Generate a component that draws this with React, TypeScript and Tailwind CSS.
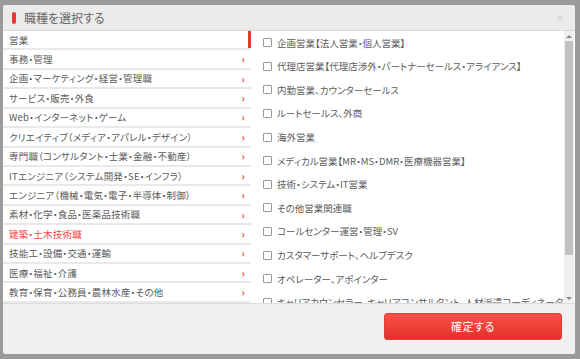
import { X } from 'lucide-react';

const categories = [
  '営業',
  '事務・管理',
  '企画・マーケティング・経営・管理職',
  'サービス・販売・外食',
  'Web・インターネット・ゲーム',
  'クリエイティブ（メディア・アパレル・デザイン）',
  '専門職（コンサルタント・士業・金融・不動産）',
  'ITエンジニア（システム開発・SE・インフラ）',
  'エンジニア（機械・電気・電子・半導体・制御）',
  '素材・化学・食品・医薬品技術職',
  '建築・土木技術職',
  '技能工・設備・交通・運輸',
  '医療・福祉・介護',
  '教育・保育・公務員・農林水産・その他',
];

const jobs = [
  '企画営業【法人営業・個人営業】',
  '代理店営業【代理店渉外・パートナーセールス・アライアンス】',
  '内勤営業、カウンターセールス',
  'ルートセールス、外商',
  '海外営業',
  'メディカル営業【MR・MS・DMR・医療機器営業】',
  '技術・システム・IT営業',
  'その他営業関連職',
  'コールセンター運営・管理・SV',
  'カスタマーサポート、ヘルプデスク',
  'オペレーター、アポインター',
  'キャリアカウンセラー、キャリアコンサルタント、人材派遣コーディネーター',
];

const font = {
  fontFamily: '"Noto Sans CJK JP", "Liberation Sans", sans-serif',
  fontFeatureSettings: '"palt"',
};

export default function App() {
  return (
    <div className="h-[359px] w-[580px] overflow-hidden bg-[#9b9b9b] pl-[3px] pt-[5px]" style={font}>
      <div className="flex h-[349px] w-[572px] flex-col overflow-hidden rounded-[3px] bg-white">
        {/* header */}
        <div className="flex h-[26px] shrink-0 items-center border-b border-[#d9d9d9] bg-[#ebebeb] pl-[9px] pr-[10px]">
          <span className="h-[12px] w-[4px] rounded-[2px] bg-[#e8382f]" />
          <span className="ml-[8px] text-[12px] leading-none text-[#666]">職種を選択する</span>
          <X size={10} strokeWidth={2} className="ml-auto text-[#c4c4c4]" />
        </div>

        {/* body */}
        <div className="flex h-[272px] shrink-0">
          <div className="flex w-[248px] shrink-0 flex-col">
            {categories.map((c, i) => (
              <div
                key={c}
                className={`relative flex flex-1 items-center border-b-2 border-[#e9e9e9] pl-[6px] pr-[6px] text-[9.5px] tracking-[0.2px] ${
                  i === 10 ? 'text-[#f0443a]' : 'text-[#5a5a5a]'
                }`}
              >
                <span className="whitespace-nowrap">{c}</span>
                {i === 0 ? (
                  <span className="absolute right-0 top-0 h-full w-[3px] bg-[#e8382f]" />
                ) : (
                  <span className="ml-auto text-[10px] font-bold leading-none text-[#ee3a32]">›</span>
                )}
              </div>
            ))}
          </div>

          <div className="flex flex-1 overflow-hidden">
            <div className="flex-1 overflow-hidden pl-[12px]">
              {jobs.map((j) => (
                <div key={j} className="flex h-[23.6px] items-center whitespace-nowrap text-[9.5px] text-[#5a5a5a]">
                  <span className="mr-[5px] h-[9px] w-[9px] shrink-0 rounded-[1px] border border-[#999] bg-white" />
                  {j}
                </div>
              ))}
            </div>
            <div className="mr-[1px] flex w-[10px] shrink-0 flex-col bg-[#efefef]">
              <div className="flex h-[10px] items-center justify-center">
                <span className="border-x-[3px] border-b-[3px] border-x-transparent border-b-[#888]" />
              </div>
              <div className="mx-[1px] h-[214px] bg-[#c2c2c2]" />
              <div className="mt-auto flex h-[10px] items-center justify-center">
                <span className="border-x-[3px] border-t-[3px] border-x-transparent border-t-[#888]" />
              </div>
            </div>
          </div>
        </div>

        {/* footer */}
        <div className="flex flex-1 justify-end border-t border-[#dddddd] bg-[#f0f0f0] pr-[13px] pt-[9px]">
          <button
            type="button"
            className="flex h-[27px] w-[178px] items-center justify-center rounded-[3px] border border-[#e0413a] bg-gradient-to-b from-[#fc5046] to-[#e2302b] text-[11px] tracking-[0.5px] text-white"
          >
            確定する
          </button>
        </div>
      </div>
    </div>
  );
}
